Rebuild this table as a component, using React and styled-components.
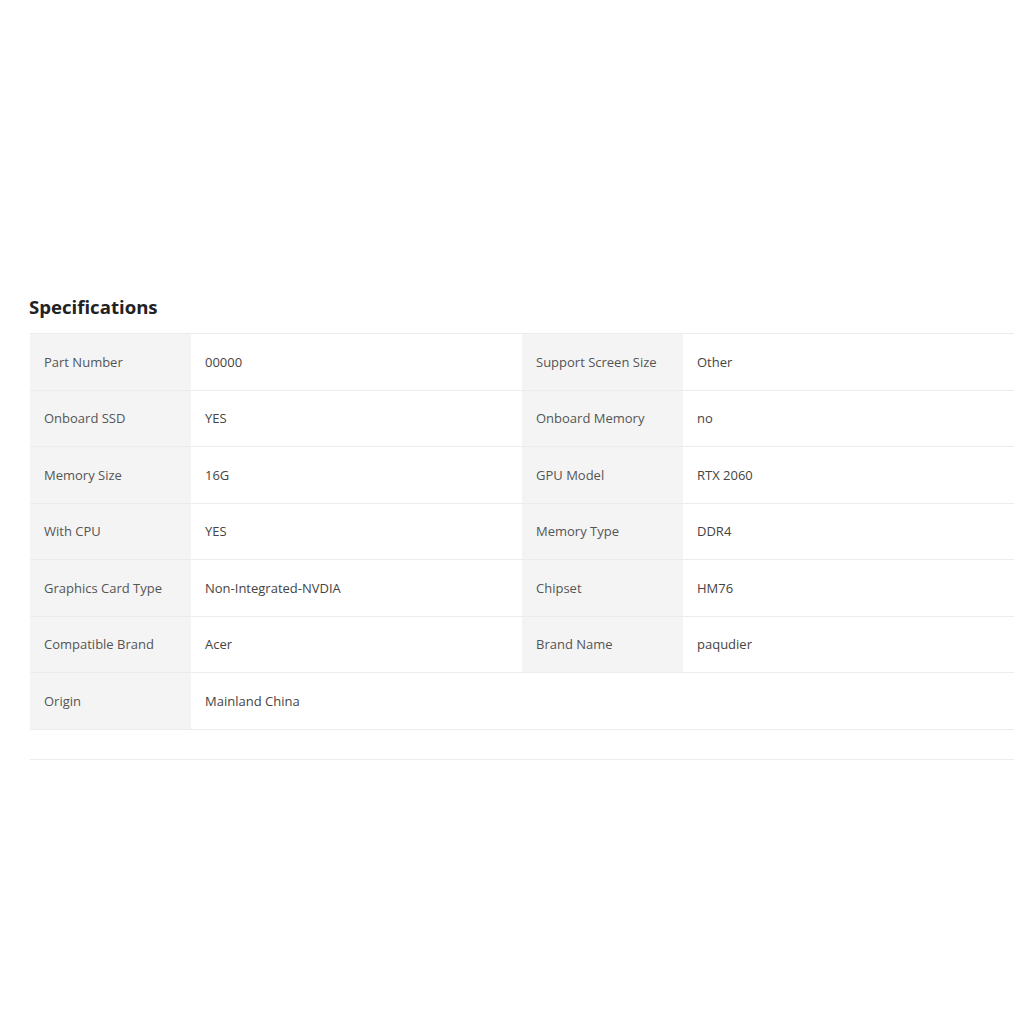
import React from "react";
import styled, { createGlobalStyle } from "styled-components";

const Global = createGlobalStyle`
  html, body { margin: 0; padding: 0; background: #fff; }
  body { font-family: "Open Sans", "Liberation Sans", sans-serif; }
`;

const Page = styled.div`
  width: 1024px;
  height: 1024px;
  padding: 295px 10px 0 30px;
  box-sizing: border-box;
`;

const Title = styled.h2`
  margin: 0 0 14px -1px;
  font-size: 18.6px;
  line-height: 24px;
  font-weight: 700;
  color: #222;
`;

const Table = styled.div`
  border-top: 1px solid #ececec;
  border-bottom: 1px solid #ececec;
  padding-bottom: 29px;
`;

const Rows = styled.div`
  display: flex;
  flex-direction: column;
`;

const Row = styled.div`
  display: grid;
  grid-template-columns: 161px 331px 161px 331px;
  height: 56.5px;
  box-sizing: border-box;
  border-bottom: 1px solid #ececec;
`;

const Cell = styled.div`
  display: flex;
  align-items: center;
  padding-left: 14px;
  font-size: 13px;
  color: ${(p) => (p.$label ? "#555" : "#444")};
  background: ${(p) => (p.$label ? "#f4f4f4" : "#fff")};
`;

const data = [
  ["Part Number", "00000", "Support Screen Size", "Other"],
  ["Onboard SSD", "YES", "Onboard Memory", "no"],
  ["Memory Size", "16G", "GPU Model", "RTX 2060"],
  ["With CPU", "YES", "Memory Type", "DDR4"],
  ["Graphics Card Type", "Non-Integrated-NVDIA", "Chipset", "HM76"],
  ["Compatible Brand", "Acer", "Brand Name", "paqudier"],
  ["Origin", "Mainland China"],
];

export default function App() {
  return (
    <Page>
      <Global />
      <Title>Specifications</Title>
      <Table>
        <Rows>
          {data.map((r, i) => (
            <Row key={i}>
              <Cell $label>{r[0]}</Cell>
              <Cell>{r[1]}</Cell>
              {r[2] ? (
                <>
                  <Cell $label>{r[2]}</Cell>
                  <Cell>{r[3]}</Cell>
                </>
              ) : null}
            </Row>
          ))}
        </Rows>
      </Table>
    </Page>
  );
}
